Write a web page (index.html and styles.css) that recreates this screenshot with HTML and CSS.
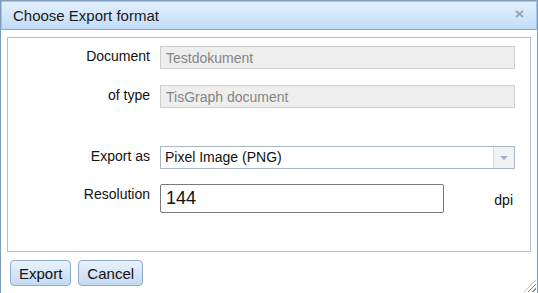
FILE: index.html
```html
<!DOCTYPE html>
<html lang="en">
<head>
    <meta charset="UTF-8">
    <title>Choose Export format</title>
    <link rel="stylesheet" href="styles.css">
</head>
<body>
    <div class="dialog">
        <div class="titlebar">
            <span class="title">Choose Export format</span>
            <span class="close">
                <svg width="9" height="8" viewBox="0 0 9 8"><path d="M1 1L8 7M8 1L1 7" stroke="#9aa8b8" stroke-width="2"/></svg>
            </span>
        </div>

        <div class="content">
            <div class="panel">
                <div class="row">
                    <label>Document</label>
                    <input class="field" type="text" value="Testdokument" disabled>
                </div>
                <div class="row">
                    <label>of type</label>
                    <input class="field" type="text" value="TisGraph document" disabled>
                </div>
                <div class="row row-export">
                    <label>Export as</label>
                    <div class="select">
                        <span class="select-text">Pixel Image (PNG)</span>
                        <span class="select-arrow"></span>
                    </div>
                </div>
                <div class="row">
                    <label>Resolution</label>
                    <div class="res-cell">
                        <input class="res-input" type="text" value="144">
                        <span class="unit">dpi</span>
                    </div>
                </div>
            </div>
        </div>

        <div class="buttons">
            <button class="btn">Export</button>
            <button class="btn">Cancel</button>
        </div>
        <span class="grip"></span>
    </div>
</body>
</html>
```

FILE: styles.css
```css
html, body {
    margin: 0;
    padding: 0;
}
body {
    font-family: 'Liberation Sans', Arial, sans-serif;
    font-size: 14px;
    color: #111;
    background: #fff;
}
.dialog {
    position: relative;
    width: 538px;
    height: 293px;
    box-sizing: border-box;
    border: 1px solid #7d9cbc;
    border-bottom: none;
    background: #fff;
}
.titlebar {
    height: 29px;
    box-sizing: border-box;
    margin: 0;
    border: 1px solid #a6c5e6;
    border-bottom-color: #86a9cf;
    background: linear-gradient(#e3f0fd, #c2dcf8);
    display: flex;
    align-items: center;
    justify-content: space-between;
    padding: 0 12px 1px 11px;
}
.title {
    font-size: 15px;
    color: #1a1a1a;
}
.close {
    display: flex;
    margin-top: -2px;
}
.content {
    padding: 7px 6px 0 6px;
}
.panel {
    height: 215px;
    box-sizing: border-box;
    border: 1px solid #b6c0cc;
    padding: 8px 15px 0 0;
}
.row {
    display: grid;
    grid-template-columns: 142px 1fr;
    column-gap: 10px;
    align-items: start;
    margin-bottom: 16px;
}
.row-export {
    margin-top: 38px;
    margin-bottom: 15px;
}
.row label {
    text-align: right;
    line-height: 18px;
    padding-top: 1px;
}
.field {
    height: 23px;
    box-sizing: border-box;
    border: 1px solid #cfcfcf;
    background: #eeeeee;
    color: #858585;
    font-family: inherit;
    font-size: 14px;
    padding: 0 5px;
    margin: 0;
    width: 100%;
}
.select {
    height: 23px;
    box-sizing: border-box;
    border: 1px solid #abb6c6;
    display: flex;
    align-items: stretch;
}
.select-text {
    flex: 1;
    padding: 0 4px;
    line-height: 21px;
    color: #111;
}
.select-arrow {
    width: 20px;
    border-left: 1px solid #d6dbe2;
    background: #f1f2f4;
    position: relative;
}
.select-arrow::after {
    content: "";
    position: absolute;
    left: 6px;
    top: 9px;
    border-left: 4px solid transparent;
    border-right: 4px solid transparent;
    border-top: 4px solid #9eafc8;
}
.res-cell {
    display: flex;
    align-items: center;
    justify-content: space-between;
}
.res-input {
    width: 284px;
    height: 29px;
    box-sizing: border-box;
    border: 1px solid #7a7a7a;
    border-radius: 2px;
    font-family: inherit;
    font-size: 18px;
    color: #111;
    padding: 0 5px;
    margin: 0;
}
.unit {
    padding: 2px 2px 0 0;
}
.buttons {
    display: flex;
    gap: 7px;
    padding: 8px 0 0 9px;
}
.btn {
    height: 26px;
    box-sizing: border-box;
    border: 1px solid #8eabc9;
    border-radius: 4px;
    background: linear-gradient(#e9f2fc, #c4daf3);
    font-family: inherit;
    font-size: 15px;
    color: #111;
    padding: 0 8px;
    margin: 0;
}
.grip {
    position: absolute;
    right: 1px;
    bottom: 1px;
    width: 12px;
    height: 12px;
    background: repeating-linear-gradient(135deg, transparent 0 2px, #8a8a8a 2px 3px);
    clip-path: polygon(100% 0, 100% 100%, 0 100%);
}
```
